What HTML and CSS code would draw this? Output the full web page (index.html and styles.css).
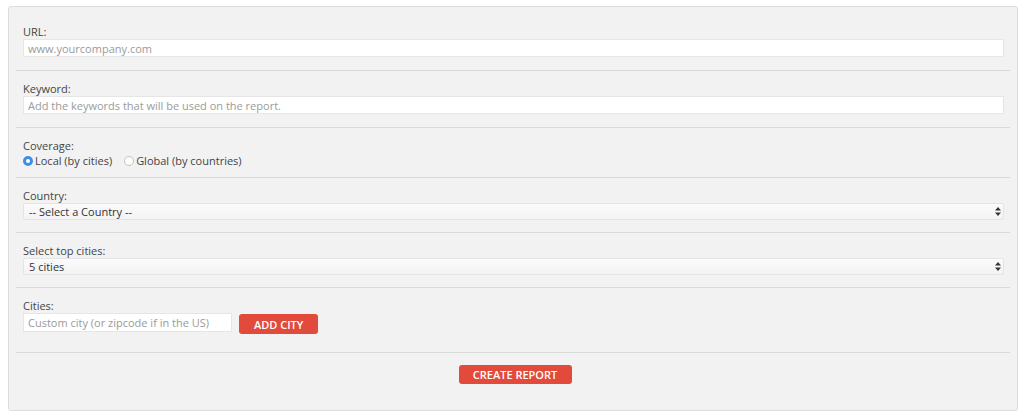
FILE: index.html
```html
<!DOCTYPE html>
<html lang="en">
<head>
    <meta charset="UTF-8">
    <meta name="viewport" content="width=device-width, initial-scale=1.0">
    <title>New Report</title>
    <link rel="stylesheet" href="styles.css">
</head>
<body>
    <form class="report-panel">
        <div class="form-group">
            <label for="url">URL:</label>
            <input type="text" id="url" name="url" placeholder="www.yourcompany.com">
        </div>

        <div class="form-group">
            <label for="keyword">Keyword:</label>
            <input type="text" id="keyword" name="keyword" placeholder="Add the keywords that will be used on the report.">
        </div>

        <div class="form-group coverage-group">
            <label>Coverage:</label>
            <div class="radio-row">
                <label class="radio"><input type="radio" name="coverage" value="local" checked>Local (by cities)</label>
                <label class="radio"><input type="radio" name="coverage" value="global">Global (by countries)</label>
            </div>
        </div>

        <div class="form-group select-group">
            <label for="country">Country:</label>
            <div class="select-wrap">
                <select id="country" name="country">
                    <option>-- Select a Country --</option>
                </select>
                <svg class="select-arrows" width="6" height="9" viewBox="0 0 6 9"><path d="M3 0 L6 3.5 H0 Z M3 9 L0 5.5 H6 Z" fill="#333"/></svg>
            </div>
        </div>

        <div class="form-group select-group">
            <label for="top_cities">Select top cities:</label>
            <div class="select-wrap">
                <select id="top_cities" name="top_cities">
                    <option>5 cities</option>
                </select>
                <svg class="select-arrows" width="6" height="9" viewBox="0 0 6 9"><path d="M3 0 L6 3.5 H0 Z M3 9 L0 5.5 H6 Z" fill="#333"/></svg>
            </div>
        </div>

        <div class="form-group cities-group">
            <label for="city">Cities:</label>
            <div class="city-row">
                <input type="text" id="city" name="city" class="city-input" placeholder="Custom city (or zipcode if in the US)">
                <button type="button" class="btn">ADD CITY</button>
            </div>
        </div>

        <div class="form-actions">
            <button type="submit" class="btn btn-wide">CREATE REPORT</button>
        </div>
    </form>
</body>
</html>
```

FILE: styles.css
```css
body {
    font-family: "Open Sans", Arial, sans-serif;
    font-size: 11px;
    background-color: #fff;
    color: #444;
    margin: 6px 6px 0 8px;
    padding: 0;
}

.report-panel {
    background-color: #f2f2f2;
    border: 1px solid #dcdcdc;
    border-radius: 3px;
    padding: 7px 7px 0 7px;
    height: 405px;
    box-sizing: border-box;
}

.form-group {
    display: flex;
    flex-direction: column;
    padding: 10px 6px 13px 7px;
    border-bottom: 1px solid #dadada;
}

.form-group > label {
    line-height: 15px;
    color: #444;
}

input[type="text"] {
    height: 18px;
    box-sizing: border-box;
    border: 1px solid #e6e6e6;
    background-color: #fff;
    padding: 0 4px;
    font-family: inherit;
    font-size: 11px;
    color: #444;
    outline: none;
}

input::placeholder {
    color: #9a9a9a;
}

.coverage-group {
    padding-bottom: 9px;
}

.radio-row {
    display: flex;
    gap: 12px;
    line-height: 15px;
}

.radio {
    display: flex;
    align-items: center;
    color: #444;
}

.radio input {
    appearance: none;
    -webkit-appearance: none;
    width: 10px;
    height: 10px;
    margin: 0 2px 0 0;
    border: 1px solid #c2c2c2;
    border-radius: 50%;
    background-color: #fff;
    box-sizing: border-box;
}

.radio input:checked {
    border: 3px solid #3d8fe6;
    background-color: #fff;
}

.select-group {
    padding-bottom: 12px;
}

.select-wrap {
    position: relative;
}

select {
    appearance: none;
    -webkit-appearance: none;
    width: 100%;
    height: 17px;
    border: 1px solid #e4e4e4;
    border-radius: 2px;
    background: linear-gradient(#fbfbfb, #f3f3f3);
    padding: 0 5px;
    font-family: inherit;
    font-size: 11px;
    color: #333;
    outline: none;
}

.select-arrows {
    position: absolute;
    right: 3px;
    top: 4px;
    pointer-events: none;
}

.cities-group {
    padding-bottom: 18px;
}

.city-row {
    display: flex;
    align-items: flex-start;
    gap: 7px;
}

.city-input {
    width: 209px;
    height: 19px !important;
}

.btn {
    background-color: #e24a3b;
    color: #fff;
    border: none;
    border-radius: 3px;
    height: 20px;
    padding: 0 15px;
    margin-top: 1px;
    font-family: inherit;
    font-size: 11px;
    font-weight: 600;
    cursor: pointer;
}

.btn:hover {
    background-color: #c83b2e;
}

.form-actions {
    display: flex;
    justify-content: center;
    padding-top: 11px;
}

.btn-wide {
    width: 113px;
    padding: 0;
    height: 19px;
    margin-left: 4px;
}
```
